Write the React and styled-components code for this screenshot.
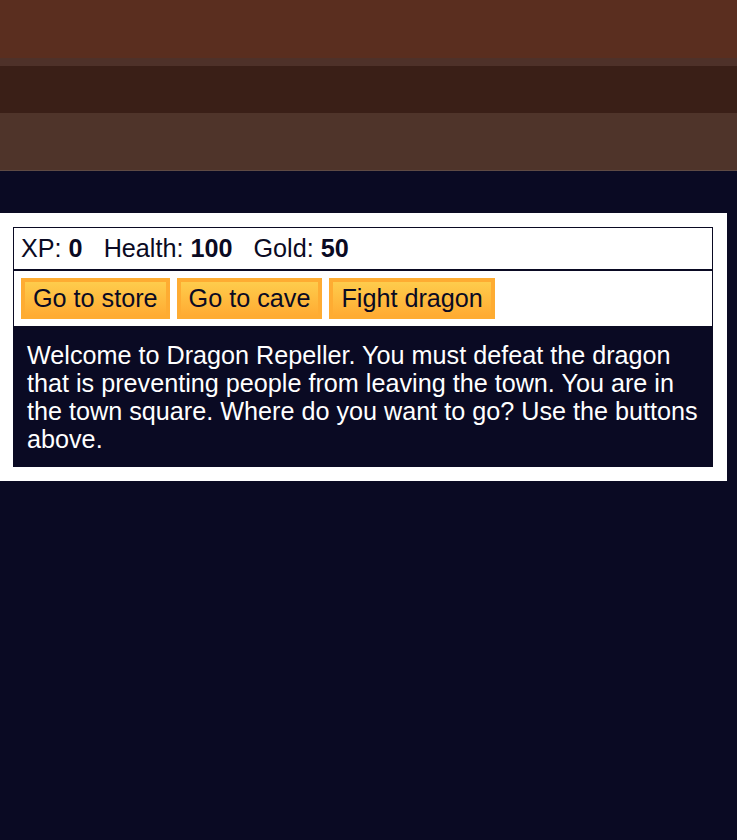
import React from "react";
import styled, { createGlobalStyle } from "styled-components";

const GlobalStyle = createGlobalStyle`
  body {
    margin: 0;
    background-color: #0a0a23;
    font-family: "Liberation Sans", Arial, sans-serif;
  }
`;

const Header = styled.header`
  display: flex;
  flex-direction: column;
  border-bottom: 1px solid #5e4a44;
`;
const Stripe = styled.div`
  height: ${(p) => p.$h}px;
  background-color: ${(p) => p.$bg};
`;
const Game = styled.div`
  width: 700px;
  margin-top: 42px;
  padding: 14px 14px 14px 13px;
  background-color: #ffffff;
  font-size: 25.2px;
`;
const Stats = styled.div`
  border: 1px solid #0a0a23;
  padding: 7px;
  line-height: 27px;
  color: #0a0a23;
`;
const Stat = styled.span`
  padding-right: 14px;
  strong {
    font-weight: bold;
  }
`;
const Controls = styled.div`
  display: flex;
  gap: 7px;
  border: 1px solid #0a0a23;
  padding: 7px;
`;
const Button = styled.button`
  cursor: pointer;
  font: inherit;
  color: #0a0a23;
  background-color: #feac32;
  background-image: linear-gradient(#fecc4c, #ffac33);
  border: 4px solid #feac32;
  padding: 3px 8px;
  line-height: 27px;
`;
const Text = styled.div`
  background-color: #0a0a23;
  color: #ffffff;
  padding: 14px;
  line-height: 28px;
`;

const stripes = [
  { h: 58, bg: "#5a2e1f" },
  { h: 8, bg: "#4e3129" },
  { h: 47, bg: "#3a1f17" },
  { h: 57, bg: "#4f342a" },
];

export default function App() {
  return (
    <>
      <GlobalStyle />
      <Header>
        {stripes.map((s, i) => (
          <Stripe key={i} $h={s.h} $bg={s.bg} />
        ))}
      </Header>
      <Game>
        <Stats>
          <Stat>
            XP: <strong>0</strong>
          </Stat>{" "}
          <Stat>
            Health: <strong>100</strong>
          </Stat>{" "}
          <Stat>
            Gold: <strong>50</strong>
          </Stat>
        </Stats>
        <Controls>
          <Button>Go to store</Button>
          <Button>Go to cave</Button>
          <Button>Fight dragon</Button>
        </Controls>
        <Text>
          Welcome to Dragon Repeller. You must defeat the dragon that is
          preventing people from leaving the town. You are in the town square.
          Where do you want to go? Use the buttons above.
        </Text>
      </Game>
    </>
  );
}
